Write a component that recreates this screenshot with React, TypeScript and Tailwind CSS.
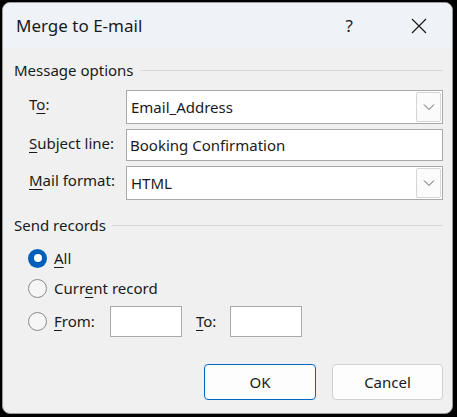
import React from "react";

const font = { fontFamily: '"Noto Sans", "Open Sans", sans-serif' };

function U({ children }: { children: React.ReactNode }) {
  return <span className="underline underline-offset-[3px] decoration-[1px]">{children}</span>;
}

function Chevron() {
  return (
    <svg width="12" height="8" viewBox="0 0 12 8" fill="none">
      <path d="M1 1.5 L6 6.5 L11 1.5" stroke="#5c5c5c" strokeWidth="1" />
    </svg>
  );
}

function Combo({ value, h }: { value: string; h: string }) {
  return (
    <div className={`flex flex-1 items-center justify-between border border-[#a9a9a9] bg-white pl-[4px] pr-[1px] ${h}`}>
      <span className="text-[15px] text-[#1a1a1a]">{value}</span>
      <div className="flex h-[30px] w-[25px] items-center justify-center rounded-[2px] border border-[#d6d6d6] bg-[#fbfbfb]">
        <Chevron />
      </div>
    </div>
  );
}

function GroupHeader({ label }: { label: string }) {
  return (
    <div className="flex items-center gap-[6px]">
      <span className="text-[15px] leading-[20px] text-[#1a1a1a]">{label}</span>
      <div className="h-px flex-1 bg-[#d9d9d9]" />
    </div>
  );
}

function Radio({ checked }: { checked?: boolean }) {
  if (checked) {
    return (
      <div className="flex h-[19px] w-[19px] shrink-0 items-center justify-center rounded-full bg-[#005fb8]">
        <div className="h-[8px] w-[8px] rounded-full bg-white" />
      </div>
    );
  }
  return <div className="h-[19px] w-[19px] shrink-0 rounded-full border border-[#8a8a8a] bg-[#f6f6f6]" />;
}

export default function App() {
  return (
    <div className="h-[417px] w-[457px] bg-black pl-[2px] pt-[2px]" style={font}>
      <div className="flex h-[412px] w-[451px] flex-col overflow-hidden rounded-[8px] border border-[#9a9a9a] bg-[#f0f0f0]">
        {/* title bar */}
        <div className="flex h-[46px] items-center bg-[#eff3f8] pl-[13px]">
          <span className="flex-1 text-[17px] text-[#1a1a1a]">Merge to E-mail</span>
          <span className="mr-[58px] text-[17px] text-[#1a1a1a]">?</span>
          <svg width="16" height="16" viewBox="0 0 16 16" className="mr-[25px]">
            <path d="M1 1 L15 15 M15 1 L1 15" stroke="#1a1a1a" strokeWidth="1.2" />
          </svg>
        </div>

        {/* body */}
        <div className="flex flex-1 flex-col pl-[11px] pr-[9px] pt-[11px] text-[#1a1a1a]">
          <GroupHeader label="Message options" />

          <div className="mt-[10px] flex flex-col gap-[5px] pl-[15px] text-[15px]">
            <div className="flex items-start">
              <span className="w-[97px] pt-[3px]">T<U>o</U>:</span>
              <Combo value="Email_Address" h="h-[34px]" />
            </div>
            <div className="flex items-start">
              <span className="w-[97px] pt-[3px]"><U>S</U>ubject line:</span>
              <div className="flex h-[32px] flex-1 items-center border border-[#a9a9a9] bg-white pl-[3px]">
                Booking Confirmation
              </div>
            </div>
            <div className="flex items-start">
              <span className="w-[97px] pt-[3px]"><U>M</U>ail format:</span>
              <Combo value="HTML" h="h-[34px]" />
            </div>
          </div>

          <div className="mt-[15px]">
            <GroupHeader label="Send records" />
          </div>

          <div className="mt-[13px] flex flex-col pl-[14px] text-[15px]">
            <div className="flex h-[20px] items-center gap-[7px]">
              <Radio checked />
              <span><U>A</U>ll</span>
            </div>
            <div className="mt-[10px] flex h-[20px] items-center gap-[7px]">
              <Radio />
              <span>Curr<U>e</U>nt record</span>
            </div>
            <div className="mt-[8px] flex items-center">
              <Radio />
              <span className="ml-[7px] w-[56px]"><U>F</U>rom:</span>
              <div className="h-[31px] w-[72px] border border-[#a9a9a9] bg-white" />
              <span className="ml-[14px] w-[34px]"><U>T</U>o:</span>
              <div className="h-[31px] w-[72px] border border-[#a9a9a9] bg-white" />
            </div>
          </div>

          <div className="mt-[27px] flex justify-end gap-[16px]">
            <button className="h-[36px] w-[112px] rounded-[4px] border border-[#0067c0] bg-[#fdfdfd] text-[15px] text-[#1a1a1a]">
              OK
            </button>
            <button className="h-[36px] w-[111px] rounded-[4px] border border-[#d0d0d0] bg-[#fdfdfd] text-[15px] text-[#1a1a1a]">
              Cancel
            </button>
          </div>
        </div>
      </div>
    </div>
  );
}
